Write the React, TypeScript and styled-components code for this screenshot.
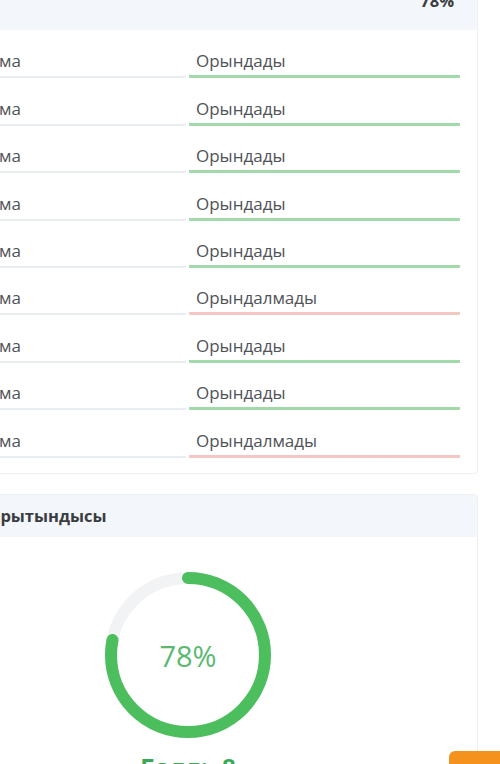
import React from "react";
import styled, { createGlobalStyle } from "styled-components";

const Global = createGlobalStyle`
  html, body { margin: 0; padding: 0; background: #ffffff; }
  body { font-family: "Open Sans", "Noto Sans", sans-serif; overflow: hidden; }
  #root { width: 500px; height: 764px; overflow: hidden; position: relative; }
`;

const Page = styled.div`
  display: flex;
  flex-direction: column;
  gap: 20px;
  margin-top: -22px;
  margin-left: -79px;
  width: 557px;
`;

const Card = styled.section`
  background: #fff;
  border: 1px solid #eef1f4;
  border-radius: 4px;
  box-sizing: border-box;
  overflow: hidden;
`;

const Header = styled.div<{ $h: number; $pl: number }>`
  height: ${(p) => p.$h}px;
  background: #f3f6fa;
  display: flex;
  align-items: center;
  justify-content: space-between;
  padding: 0 23px 0 ${(p) => p.$pl}px;
  box-sizing: border-box;
  color: #3a3d40;
  font-weight: 700;
  font-size: 16.5px;
`;

const HeaderTop = styled(Header)`
  align-items: flex-start;
  justify-content: flex-end;
  padding-top: 10px;
`;

const Body = styled.div`
  padding: 1px 19px 15px 20px;
`;

const Row = styled.div`
  display: grid;
  grid-template-columns: 244px 271px;
  column-gap: 3px;
  height: 47.4px;
  align-items: end;
`;

const Cell = styled.div<{ $line: string; $thick: number; $shift?: number }>`
  font-size: 17px;
  line-height: 22px;
  color: #505357;
  padding-left: ${(p) => (p.$thick > 2 ? 7 : 0)}px;
  text-indent: ${(p) => p.$shift ?? 0}px;
  padding-bottom: ${(p) => (p.$thick > 2 ? 3 : 4)}px;
  border-bottom: ${(p) => p.$thick}px solid ${(p) => p.$line};
  border-radius: 1px;
  white-space: nowrap;
`;

const ResultBody = styled.div`
  padding: 35px 0 0 183px;
`;

const Gauge = styled.div`
  width: 166px;
  display: flex;
  flex-direction: column;
  align-items: center;
`;

const Ring = styled.div`
  position: relative;
  width: 166px;
  height: 166px;
`;

const RingLabel = styled.div`
  position: absolute;
  inset: 0;
  display: flex;
  align-items: center;
  justify-content: center;
  font-size: 29px;
  color: #5bb872;
  padding-top: 2px;
`;

const Score = styled.div`
  margin-top: 12px;
  font-size: 24px;
  font-weight: 700;
  color: #3aa957;
  white-space: nowrap;
  word-spacing: 8px;
`;

const FloatBtn = styled.div`
  position: absolute;
  left: 449px;
  top: 751px;
  width: 80px;
  height: 40px;
  background: #f5921e;
  border-radius: 6px;
`;

const rows = [true, true, true, true, true, false, true, true, false];

function Progress({ value }: { value: number }) {
  const r = 77;
  const c = 2 * Math.PI * r;
  return (
    <Ring>
      <svg width="166" height="166" viewBox="0 0 166 166">
        <circle cx="83" cy="83" r={r} fill="none" stroke="#f1f3f5" strokeWidth="12" />
        <circle
          cx="83"
          cy="83"
          r={r}
          fill="none"
          stroke="#4cbe5e"
          strokeWidth="12"
          strokeLinecap="round"
          strokeDasharray={`${(c * value) / 100} ${c}`}
          transform="rotate(-90 83 83)"
        />
      </svg>
      <RingLabel>{value}%</RingLabel>
    </Ring>
  );
}

export default function App() {
  return (
    <>
      <Global />
      <Page>
        <Card>
          <HeaderTop $h={51} $pl={20}>
            <span>78%</span>
          </HeaderTop>
          <Body>
            {rows.map((ok, i) => (
              <Row key={i}>
                <Cell $line="#e9edf0" $thick={2} $shift={-4}>Тапсырма</Cell>
                <Cell $line={ok ? "#a2d9aa" : "#f5c7c4"} $thick={3}>
                  {ok ? "Орындады" : "Орындалмады"}
                </Cell>
              </Row>
            ))}
          </Body>
        </Card>
        <Card>
          <Header $h={42} $pl={16}>
            <span>Тест қорытындысы</span>
          </Header>
          <ResultBody>
            <Gauge>
              <Progress value={78} />
              <Score>Балл: 8</Score>
            </Gauge>
          </ResultBody>
        </Card>
      </Page>
      <FloatBtn />
    </>
  );
}
